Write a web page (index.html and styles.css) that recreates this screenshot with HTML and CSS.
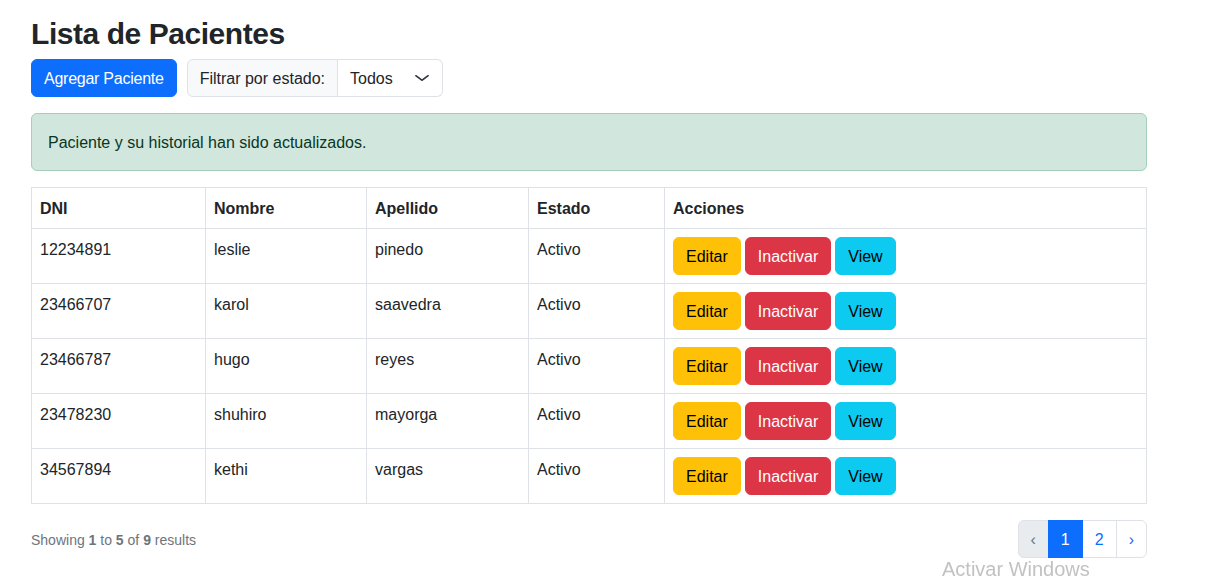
FILE: index.html
```html
<!DOCTYPE html>
<html lang="es">
<head>
<meta charset="utf-8">
<title>Lista de Pacientes</title>
<link rel="stylesheet" href="styles.css">
</head>
<body>
<div class="container">
  <h2 class="title">Lista de Pacientes</h2>
  <div class="toolbar">
    <button class="btn btn-primary btn-add">Agregar Paciente</button>
    <div class="input-group">
      <span class="input-group-text">Filtrar por estado:</span>
      <div class="form-select">
        <span>Todos</span>
        <svg class="chevron" viewBox="0 0 16 16" width="16" height="12" preserveAspectRatio="none"><path fill="none" stroke="#343a40" stroke-linecap="round" stroke-linejoin="round" stroke-width="2" d="m2 5 6 6 6-6"/></svg>
      </div>
    </div>
  </div>
  <div class="alert">Paciente y su historial han sido actualizados.</div>
  <table class="table">
    <colgroup>
      <col class="c1"><col class="c2"><col class="c3"><col class="c4"><col class="c5">
    </colgroup>
    <thead>
      <tr><th>DNI</th><th>Nombre</th><th>Apellido</th><th>Estado</th><th>Acciones</th></tr>
    </thead>
    <tbody>
      <tr><td>12234891</td><td>leslie</td><td>pinedo</td><td>Activo</td><td><div class="actions"><button class="btn btn-warning">Editar</button><button class="btn btn-danger">Inactivar</button><button class="btn btn-info">View</button></div></td></tr>
      <tr><td>23466707</td><td>karol</td><td>saavedra</td><td>Activo</td><td><div class="actions"><button class="btn btn-warning">Editar</button><button class="btn btn-danger">Inactivar</button><button class="btn btn-info">View</button></div></td></tr>
      <tr><td>23466787</td><td>hugo</td><td>reyes</td><td>Activo</td><td><div class="actions"><button class="btn btn-warning">Editar</button><button class="btn btn-danger">Inactivar</button><button class="btn btn-info">View</button></div></td></tr>
      <tr><td>23478230</td><td>shuhiro</td><td>mayorga</td><td>Activo</td><td><div class="actions"><button class="btn btn-warning">Editar</button><button class="btn btn-danger">Inactivar</button><button class="btn btn-info">View</button></div></td></tr>
      <tr><td>34567894</td><td>kethi</td><td>vargas</td><td>Activo</td><td><div class="actions"><button class="btn btn-warning">Editar</button><button class="btn btn-danger">Inactivar</button><button class="btn btn-info">View</button></div></td></tr>
    </tbody>
  </table>
  <nav class="pager">
    <p class="summary">Showing <span class="fw">1</span> to <span class="fw">5</span> of <span class="fw">9</span> results</p>
    <ul class="pagination">
      <li class="page-item disabled"><span class="page-link">&lsaquo;</span></li>
      <li class="page-item active"><span class="page-link">1</span></li>
      <li class="page-item"><a class="page-link" href="#">2</a></li>
      <li class="page-item"><a class="page-link" href="#">&rsaquo;</a></li>
    </ul>
  </nav>
</div>
<div class="watermark">Activar Windows</div>
</body>
</html>
```

FILE: styles.css
```css
* { box-sizing: border-box; }
html, body { margin: 0; padding: 0; }
body {
  font-family: "Liberation Sans", Arial, sans-serif;
  font-size: 16px;
  line-height: 1.5;
  color: #212529;
  background: #fff;
}
.container {
  width: 1116px;
  margin-left: 31px;
}
.title {
  font-size: 30px;
  font-weight: 700;
  letter-spacing: -0.45px;
  line-height: 1.2;
  margin: 16px 0 7px;
  color: #212529;
}
.toolbar {
  display: flex;
  align-items: center;
  gap: 10px;
}
.btn {
  font-family: inherit;
  font-size: 16px;
  line-height: 24px;
  padding: 7px 12px 5px;
  border: 1px solid transparent;
  border-radius: 6px;
  cursor: pointer;
  white-space: nowrap;
}
.btn-add { letter-spacing: -0.25px; }
.btn-primary { background: #0d6efd; border-color: #0d6efd; color: #fff; }
.btn-warning { background: #ffc107; border-color: #ffc107; color: #000; }
.btn-danger { background: #dc3545; border-color: #dc3545; color: #fff; }
.btn-info { background: #0dcaf0; border-color: #0dcaf0; color: #000; }
.input-group {
  display: flex;
  height: 38px;
}
.input-group-text {
  display: flex;
  align-items: center;
  padding: 7px 12px 5px;
  background: #f8f9fa;
  border: 1px solid #dee2e6;
  border-radius: 6px 0 0 6px;
  white-space: nowrap;
}
.form-select {
  display: flex;
  align-items: center;
  justify-content: space-between;
  width: 105px;
  padding: 7px 12px 5px;
  border: 1px solid #dee2e6;
  border-left: 0;
  border-radius: 0 6px 6px 0;
  background: #fff;
}
.chevron { display: block; margin-top: -2px; }
.alert {
  margin-top: 16px;
  padding: 17px 16px 15px;
  background: #d1e7dd;
  border: 1px solid #a3cfbb;
  border-radius: 6px;
  color: #0a3622;
}
.table {
  width: 1115px;
  margin-top: 16px;
  border-collapse: collapse;
  table-layout: fixed;
  border: 1px solid #dee2e6;
}
.c1 { width: 174px; }
.c2 { width: 161px; }
.c3 { width: 162px; }
.c4 { width: 136px; }
.c5 { width: 482px; }
.table th, .table td {
  border: 1px solid #dee2e6;
  padding: 9px 8px 7px;
  text-align: left;
  vertical-align: top;
}
.table td:last-child { padding-top: 8px; padding-bottom: 8px; }
.table th { font-weight: 700; }
.actions {
  display: flex;
  gap: 4px;
}
.pager {
  display: flex;
  align-items: center;
  justify-content: space-between;
  margin-top: 16px;
}
.summary {
  margin: 0;
  padding-top: 2px;
  font-size: 14px;
  color: #6c757d;
}
.fw { font-weight: 700; }
.pagination {
  display: flex;
  list-style: none;
  margin: 0;
  padding: 0;
}
.page-link {
  display: block;
  padding: 7px 12px 5px;
  line-height: 24px;
  border: 1px solid #dee2e6;
  margin-left: -1px;
  color: #0d6efd;
  text-decoration: none;
  background: #fff;
}
.page-item:first-child .page-link {
  margin-left: 0;
  border-radius: 6px 0 0 6px;
}
.page-item:last-child .page-link { border-radius: 0 6px 6px 0; }
.page-item.disabled .page-link { background: #e9ecef; color: #6c757d; }
.page-item.active .page-link {
  background: #0d6efd;
  border-color: #0d6efd;
  color: #fff;
  position: relative;
}
.watermark {
  position: fixed;
  left: 942px;
  top: 557px;
  font-size: 20px;
  line-height: 24px;
  color: #c2c2c2;
  white-space: nowrap;
}
```
